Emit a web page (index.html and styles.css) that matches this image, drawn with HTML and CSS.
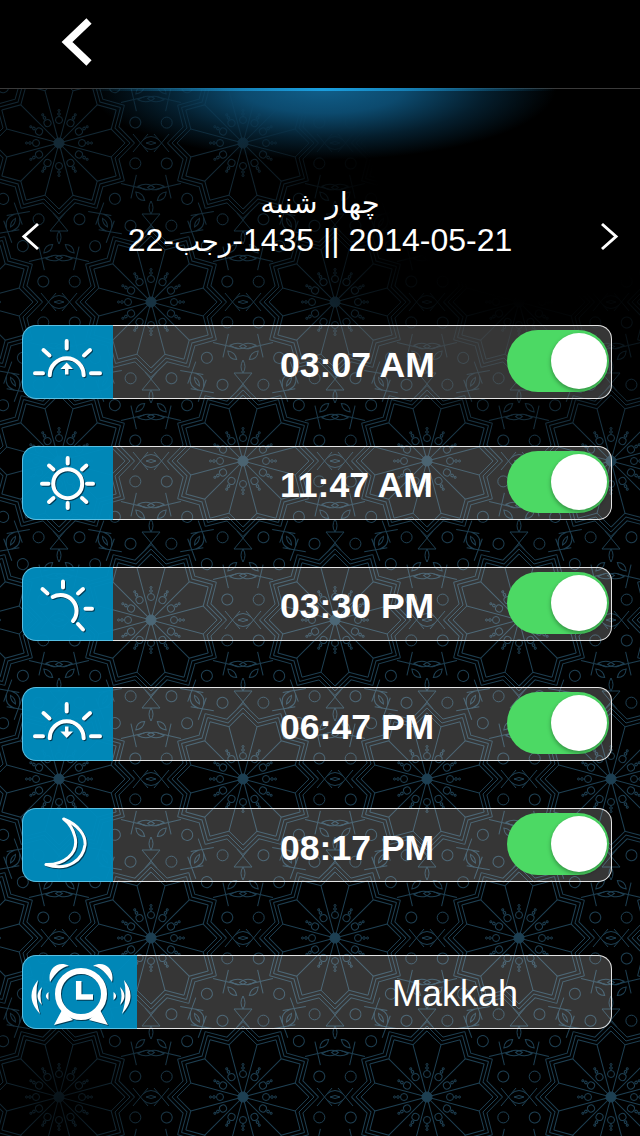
FILE: index.html
```html
<!DOCTYPE html>
<html lang="en">
<head>
    <meta charset="UTF-8">
    <meta name="viewport" content="width=device-width, initial-scale=1.0">
    <title>Prayer Alarms</title>
    <link rel="stylesheet" href="styles.css">
</head>
<body>
    <!-- Background ornament -->
    <svg class="ornament" width="640" height="1136" aria-hidden="true">
        <defs>
            <g id="wedge">
                <line x1="0" y1="0" x2="52.2" y2="14"/>
                <polyline points="66,0 52.2,14 57.2,33"/>
                <polyline points="71,0 56,15 61.5,35.5"/>
                <polyline points="75.5,0 59.9,16 65.4,37.7"/>
                <circle cx="23" cy="0" r="3.5"/>
                <circle class="dot" cx="29" cy="0" r="1.3"/>
                <circle class="dot" cx="32.5" cy="0" r="1"/>
                <circle cx="76.3" cy="20.4" r="5.5"/>
            </g>
            <g id="cross">
                <path d="M-18,-9 L-3,9 M-18,9 L-3,-9 M18,-9 L3,9 M18,9 L3,-9"/>
                <path d="M-8,-3 Q0,-10 8,-3 M-8,3 Q0,10 8,3 M-5,0 Q0,-3 5,0 Q0,3 -5,0Z"/>
            </g>
            <g id="tulip">
                <path d="M-6,-14 L9,4 M6,-14 L-9,4 M-9,4 H9"/>
                <path d="M0,4 Q-4,10 0,17 Q4,10 0,4Z"/>
            </g>
            <g id="leaf">
                <path d="M-3,-11 L4,12 M-12,4 L11,-3"/>
                <path d="M4,-2 Q10,-11 19,-9 Q15,-1 4,-2Z M5,4 Q12,1 17,7 Q10,11 5,4Z"/>
            </g>
            <g id="medallion" class="medallion">
                <use href="#wedge"/>
                <use href="#wedge" transform="rotate(30)"/>
                <use href="#wedge" transform="rotate(60)"/>
                <use href="#wedge" transform="rotate(90)"/>
                <use href="#wedge" transform="rotate(120)"/>
                <use href="#wedge" transform="rotate(150)"/>
                <use href="#wedge" transform="rotate(180)"/>
                <use href="#wedge" transform="rotate(210)"/>
                <use href="#wedge" transform="rotate(240)"/>
                <use href="#wedge" transform="rotate(270)"/>
                <use href="#wedge" transform="rotate(300)"/>
                <use href="#wedge" transform="rotate(330)"/>
                <circle class="hub" r="5"/>
                <use href="#cross" transform="translate(92,0)"/>
                <use href="#cross" transform="rotate(60) translate(92,0)"/>
                <use href="#cross" transform="rotate(120) translate(92,0)"/>
                <use href="#tulip" transform="translate(0,84)"/>
                <use href="#tulip" transform="rotate(180) translate(0,84)"/>
                <use href="#leaf" transform="rotate(30) translate(86,0)"/>
                <use href="#leaf" transform="rotate(150) translate(86,0) scale(1,-1)"/>
                <use href="#leaf" transform="rotate(210) translate(86,0)"/>
                <use href="#leaf" transform="rotate(330) translate(86,0) scale(1,-1)"/>
            </g>
            <pattern id="tile" x="-33" y="-16" width="184" height="318" patternUnits="userSpaceOnUse">
                <use href="#medallion" x="92" y="159"/>
                <use href="#medallion" x="-92" y="159"/>
                <use href="#medallion" x="276" y="159"/>
                <use href="#medallion" x="0" y="0"/>
                <use href="#medallion" x="184" y="0"/>
                <use href="#medallion" x="0" y="318"/>
                <use href="#medallion" x="184" y="318"/>
            </pattern>
        </defs>
        <rect width="640" height="1136" fill="url(#tile)"/>
    </svg>
    <div class="ornament-fade"></div>

    <header class="topbar">
        <button class="back-btn" aria-label="Back">
            <svg width="36" height="50" viewBox="0 0 36 50"><polyline points="31,4 9,25 31,46"/></svg>
        </button>
    </header>
    <div class="glow"></div>

    <main class="content">
        <section class="date-nav">
            <svg class="arrow" width="20" height="30" viewBox="0 0 20 30"><polyline points="17,2 3,14.5 17,27"/></svg>
            <div class="date-text">
                <div class="weekday" lang="fa">چهار شنبه</div>
                <div class="date-line">22-<bdi class="month" lang="ar">رجب</bdi>-1435 || 2014-05-21</div>
            </div>
            <svg class="arrow" width="20" height="30" viewBox="0 0 20 30"><polyline points="3,2 17,14.5 3,27"/></svg>
        </section>

        <section class="prayer-list">
            <div class="row">
                <div class="row-icon">
                    <svg width="90" height="72" viewBox="0 0 90 72">
                        <path d="M26.7,49.3 A17,17 0 0 1 60.7,49.3"/>
                        <path d="M43.7,15 V22.5 M20.5,24 L26.5,29.5 M67,24 L61,29.5 M12,47.3 H20 M68,47.3 H77"/>
                        <path class="solid" d="M43.7,36.5 L50,43 H45.5 V48.5 H42 V43 H37.4 Z"/>
                    </svg>
                </div>
                <div class="row-body">
                    <span class="time">03:07 AM</span>
                    <div class="switch"><div class="knob"></div></div>
                </div>
            </div>
            <div class="row">
                <div class="row-icon">
                    <svg width="90" height="72" viewBox="0 0 90 72">
                        <circle cx="44.7" cy="36.7" r="14.5"/>
                        <path d="M44.7,11 V16.5 M44.7,56 V61 M19,36.7 H25.5 M64,36.7 H70 M26,18.5 L30.5,22.5 M63.4,18.5 L59,22.5 M26,55 L30.5,51 M63.4,55 L59,51"/>
                    </svg>
                </div>
                <div class="row-body">
                    <span class="time">11:47 AM</span>
                    <div class="switch"><div class="knob"></div></div>
                </div>
            </div>
            <div class="row">
                <div class="row-icon">
                    <svg width="90" height="72" viewBox="0 0 90 72">
                        <path d="M29.7,29 A16,16 0 0 1 50,53"/>
                        <path d="M40,13.5 V19.5 M19.5,21 L24.5,25.5 M60,21 L55,25.5 M62.5,40.7 H69 M55,56 L60,61.5"/>
                    </svg>
                </div>
                <div class="row-body">
                    <span class="time">03:30 PM</span>
                    <div class="switch"><div class="knob"></div></div>
                </div>
            </div>
            <div class="row">
                <div class="row-icon">
                    <svg width="90" height="72" viewBox="0 0 90 72">
                        <path d="M26.7,50.3 A17,17 0 0 1 60.7,50.3"/>
                        <path d="M43.7,16 V23.5 M20.5,25 L26.5,30.5 M67,25 L61,30.5 M12,48.3 H20 M68,48.3 H77"/>
                        <path class="solid" d="M42,38.5 H45.5 V43.5 H50 L43.7,50 L37.4,43.5 H42 Z"/>
                    </svg>
                </div>
                <div class="row-body">
                    <span class="time">06:47 PM</span>
                    <div class="switch"><div class="knob"></div></div>
                </div>
            </div>
            <div class="row">
                <div class="row-icon">
                    <svg width="90" height="72" viewBox="0 0 90 72">
                        <path class="thin" d="M40.7,10 C56,16 63,27 62,36 C60,50 46,63 23,55.5 C40,56 56,45 52,28 C50,20 46,14 40.7,10 Z"/>
                    </svg>
                </div>
                <div class="row-body">
                    <span class="time">08:17 PM</span>
                    <div class="switch"><div class="knob"></div></div>
                </div>
            </div>
        </section>

        <section class="city-row row">
            <div class="row-icon">
                <svg width="114" height="72" viewBox="0 0 114 72">
                    <circle class="ring" cx="58" cy="38" r="23"/>
                    <path class="hand" d="M55.7,25 V41 H70"/>
                    <path class="solid" d="M27,26 C24,13 35,4 46,10 C38,11 33,17 27,26 Z M89,26 C92,13 81,4 70,10 C78,11 83,17 89,26 Z"/>
                    <path class="solid" d="M31,69 L39,54 L50,64 Z M85,69 L77,54 L66,64 Z"/>
                    <g id="waves">
                        <path class="solid" d="M15,24 C6,35 6,46 17,58 C13,46 12.5,35 15,24 Z"/>
                        <path class="solid" d="M19,31 C13,37 13,43 19,49 C17,43 17,37 19,31 Z"/>
                        <path class="solid" d="M25.5,36 C22,38.5 22,41.5 25.5,44 Z"/>
                    </g>
                    <use href="#waves" transform="translate(116,0) scale(-1,1)"/>
                </svg>
            </div>
            <div class="row-body">
                <span class="city">Makkah</span>
            </div>
        </section>
    </main>
</body>
</html>
```

FILE: styles.css
```css
* {
    box-sizing: border-box;
}

body {
    margin: 0;
    width: 640px;
    height: 1136px;
    background-color: #000;
    color: #fff;
    font-family: 'Liberation Sans', 'DejaVu Sans', sans-serif;
    position: relative;
    overflow: hidden;
}

/* background ornament */
.ornament {
    position: absolute;
    left: 0;
    top: 0;
}

.medallion {
    fill: none;
    stroke: #1d3f52;
    stroke-width: 1;
}

.medallion .dot,
.medallion .hub {
    fill: #1d3f52;
}

.ornament-fade {
    position: absolute;
    left: 0;
    top: 0;
    width: 640px;
    height: 1136px;
    background:
        radial-gradient(circle at 540px 130px, #000 0, #000 170px, rgba(0, 0, 0, 0) 320px),
        radial-gradient(circle at 60px 1100px, rgba(0, 0, 0, 0.7) 0, rgba(0, 0, 0, 0) 140px),
        linear-gradient(to bottom, rgba(0, 0, 0, 0.5) 0, rgba(0, 0, 0, 0.1) 400px, rgba(0, 0, 0, 0) 600px);
}

.topbar {
    position: relative;
    height: 89px;
    background-color: #000;
    border-bottom: 1px solid #3a3a3a;
    padding: 17px 0 0 58px;
}

.back-btn {
    display: block;
    padding: 0;
    background: none;
    border: none;
}

.back-btn svg {
    display: block;
    fill: none;
    stroke: #fff;
    stroke-width: 7.5;
}

.glow {
    position: absolute;
    left: 90px;
    top: 88px;
    width: 466px;
    height: 74px;
    background:
        linear-gradient(to right, rgba(26, 158, 222, 0) 0, #1a9ede 50%, rgba(26, 158, 222, 0) 100%) top / 100% 3px no-repeat,
        radial-gradient(ellipse 233px 72px at 50% 0, #105f8b 0, #0c4a6e 35%, rgba(8, 50, 75, 0.6) 70%, rgba(0, 0, 0, 0) 100%);
}

.content {
    position: relative;
    padding: 0 28px 0 22px;
}

.date-nav {
    height: 236px;
    padding-top: 96px;
    display: flex;
    justify-content: space-between;
    align-items: flex-start;
    margin: 0 -7px 0 -1px;
}

.arrow {
    margin-top: 37px;
    fill: none;
    stroke: #fff;
    stroke-width: 3;
}

.date-text {
    text-align: center;
    flex: 1;
}

.weekday {
    font-size: 29px;
    line-height: 36px;
}

.date-line {
    margin-top: 1px;
    font-size: 32px;
    line-height: 37px;
}

.month {
    font-size: 28px;
}

.prayer-list {
    display: flex;
    flex-direction: column;
    gap: 46.75px;
}

.row {
    display: flex;
    height: 74px;
}

.row-icon {
    border: 1px solid #58bfe3;
    border-right: none;
    border-radius: 14px 0 0 14px;
    background-color: rgba(0, 140, 190, 0.96);
    flex-shrink: 0;
}

.row-icon svg {
    display: block;
    fill: none;
    stroke: #fff;
    stroke-width: 4;
    stroke-linecap: round;
    filter: drop-shadow(1px 1px 0 rgba(0, 40, 60, 0.8));
}

.row-icon .solid {
    fill: #fff;
    stroke: none;
}

.row-icon .thin {
    stroke-width: 3;
    stroke-linejoin: round;
}

.row-icon .ring {
    stroke-width: 6;
}

.row-icon .hand {
    stroke-width: 5.5;
    stroke-linecap: butt;
}

.row-body {
    flex: 1;
    display: flex;
    align-items: center;
    border: 1px solid #e4e4e4;
    border-left: none;
    border-radius: 0 14px 14px 0;
    background-color: rgba(255, 255, 255, 0.21);
}

.time {
    margin-left: 167px;
    margin-top: 6px;
    font-size: 35.6px;
    font-weight: 700;
}

.switch {
    margin-left: auto;
    margin-right: 2px;
    align-self: flex-start;
    margin-top: 4px;
    width: 102px;
    height: 62px;
    border-radius: 31px;
    background-color: #4cd964;
    display: flex;
    justify-content: flex-end;
    align-items: center;
    padding-right: 2px;
}

.knob {
    width: 56px;
    height: 56px;
    border-radius: 50%;
    background-color: #fff;
    box-shadow: 0 2px 4px rgba(0, 0, 0, 0.35);
}

.city-row {
    margin-top: 73px;
}

.city {
    margin-left: 255px;
    margin-top: 4px;
    font-size: 36px;
}
```
